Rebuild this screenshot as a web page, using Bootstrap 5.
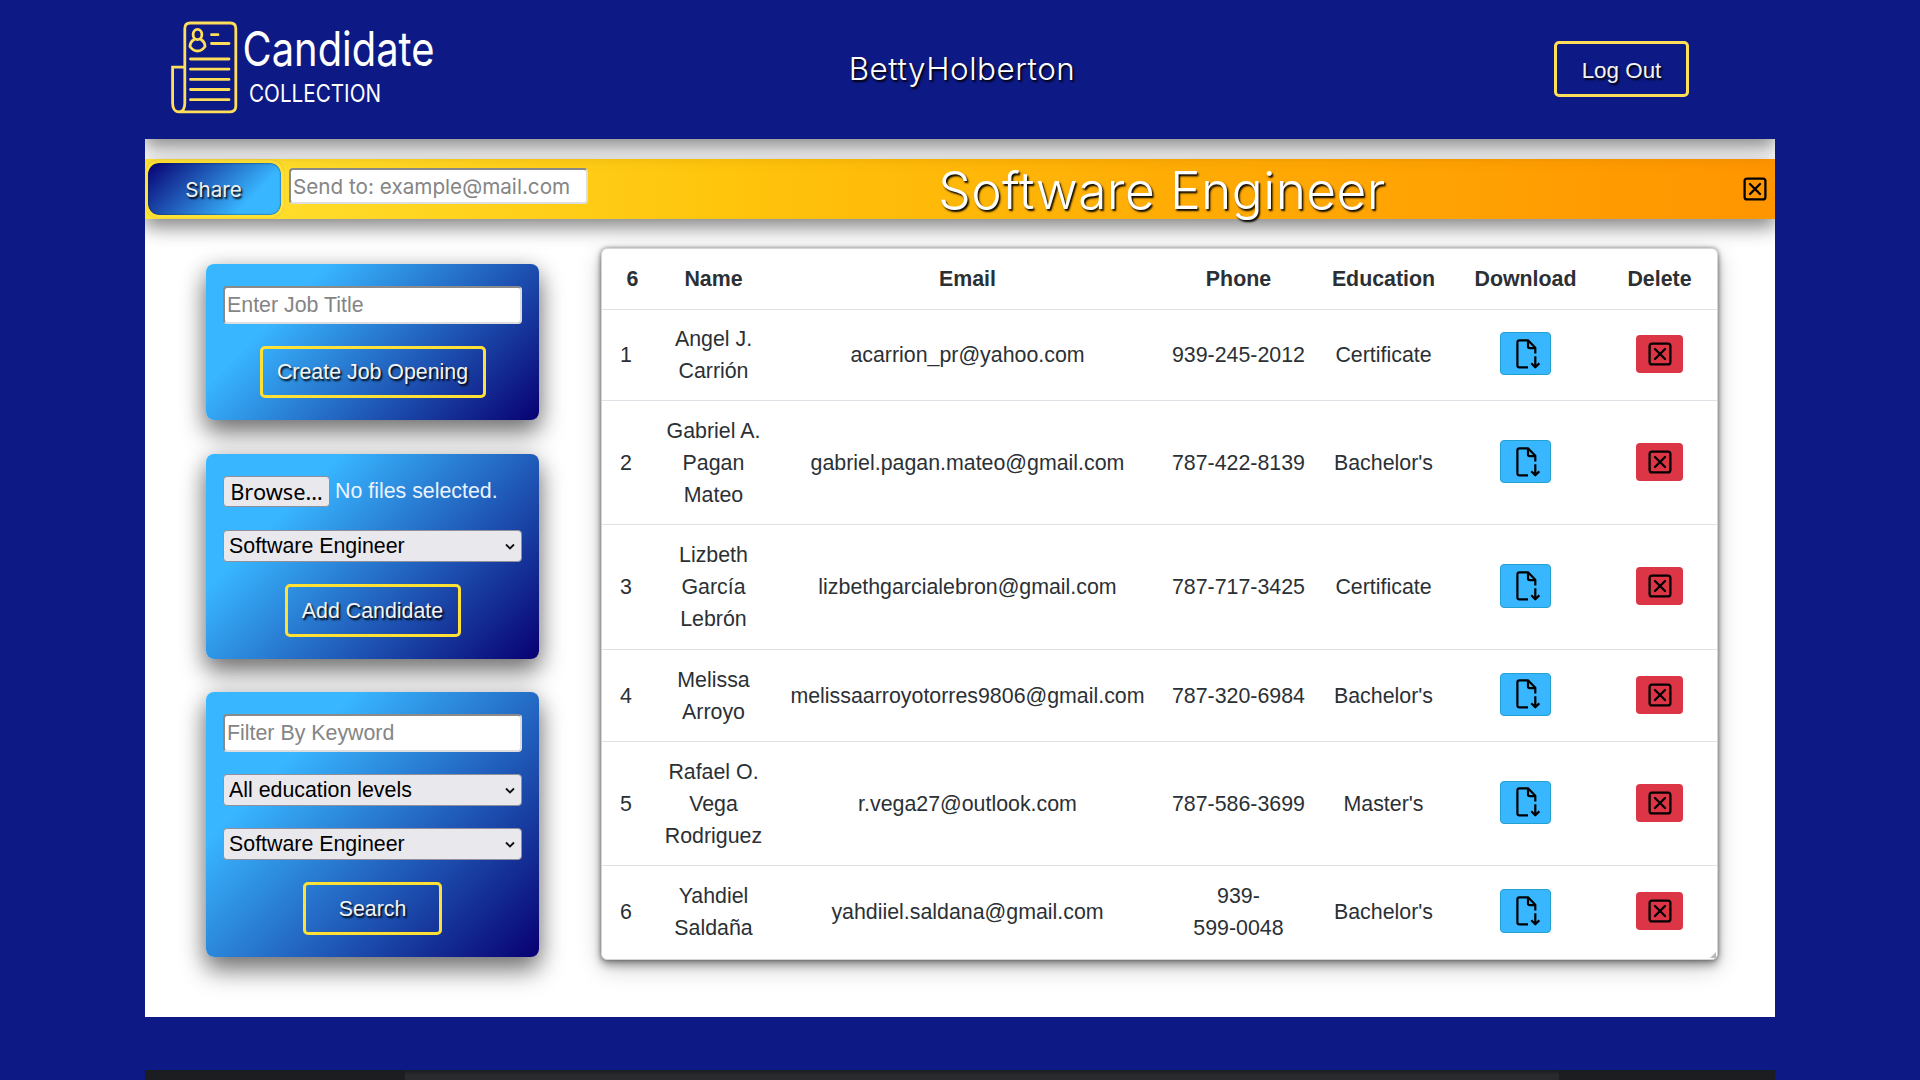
<!DOCTYPE html>
<html lang="en">
<head>
<meta charset="utf-8">
<meta name="viewport" content="width=device-width, initial-scale=1">
<title>Candidate Collection</title>
<link rel="stylesheet" href="https://cdn.jsdelivr.net/npm/bootstrap@5.3.0/dist/css/bootstrap.min.css">
<style>
body{background:#0d1985;font-family:"Liberation Sans",Arial,sans-serif;font-size:21.37px;color:#2b3035;height:1080px;overflow:hidden}
.dm{font-family:Inter,"Open Sans",sans-serif}
.page-col{width:1630px;overflow:hidden}
.site-head{height:139px;background:#0d1985;z-index:3;box-shadow:0 8px 16px rgba(0,0,0,.38),0 8px 26px rgba(0,0,0,.12)}
.head-side{width:430px}
.logo{margin-left:20px;display:block}
.user-name{font-size:31.4px;font-weight:300;color:#fff;text-shadow:1.5px 1.5px 2px #000;letter-spacing:.55px;margin-left:4px}
.line-btn{border:3.5px solid #ffe135;border-radius:5px;background:transparent;color:#f4f4f4;text-shadow:1.5px 1.5px 2px #000;height:52.5px;padding:2px 0 0;line-height:1;font-size:21.37px}
.logout{width:135px;height:56px;border-color:#ffde59;margin-right:86px;margin-top:-1px;padding-top:4px;font-size:22.4px}
.main-area{height:878px;background:#fff;overflow:hidden;padding-top:20px}
.title-bar{height:60px;background:linear-gradient(90deg,#ffe433 0%,#ffc40c 36%,#ffad05 62%,#ff9500 100%);box-shadow:0 8px 16px rgba(0,0,0,.38),0 8px 26px rgba(0,0,0,.14)}
.share-btn{width:139px;height:58px;border:3px solid #ffe135;border-radius:14px;background:linear-gradient(315deg,#38b6ff 25%,#080072 100%) padding-box;color:#eee;text-shadow:1.5px 1.5px 2px #000;font-size:20.7px;box-shadow:inset 0 0 2px #123,0 0 1px #987}
.share-btn span{position:relative;left:-1px;top:1px}
input.field{border:2px solid #8a8a8a;border-color:#8a8a8a #dedede #dedede #8a8a8a;border-radius:4px;background:#fff;color:#212529;padding:1px 2px 0;height:38px;width:100%;display:block;outline:0}
input.field::placeholder{color:#858585;opacity:1}
input.mail{width:299px;height:36px;font-size:20.7px;margin:-6px 0 0 5px}
.job-title{font-size:51.5px;font-weight:300;color:#fff;text-shadow:1.5px 2px 2px #000;letter-spacing:.4px;line-height:60px;white-space:nowrap;padding:2px 7px 0 0}
.side{width:333px;margin-left:61px;padding-top:44.5px;gap:33.5px}
.panel{border-radius:8px;background:linear-gradient(135deg,#38b6ff 25%,#080072 100%);box-shadow:0 14px 26px rgba(0,0,0,.42),0 5px 22px rgba(0,0,0,.28);padding:22px 17px;gap:22px}
.file-row{height:32.5px}
.pick{position:relative;width:100%}
.pick select{appearance:none;display:block;width:100%;height:32px;background:#e9e9ed;border:1.3px solid #8f8f9d;border-radius:4px;padding:0 5px;line-height:29px;color:#000}
.pick svg{position:absolute;right:7px;top:13px}
.browse{width:107px;height:31px;background:#e9e9ed;border:1.3px solid #8f8f9d;border-radius:4px;font-family:"Noto Sans",sans-serif;font-size:21.8px;line-height:27px;color:#000;padding:0;white-space:nowrap}
.nofile{color:#eaf3ff;margin-left:5px}
.list-card{width:1117px;height:712px;margin-left:61.5px;margin-top:28.5px;border:1.5px solid #d3d6d9;border-radius:6px;background:#fff;box-shadow:0 0 4px rgba(0,0,0,.45),0 5px 8px rgba(0,0,0,.35),0 8px 24px rgba(0,0,0,.2)}
.people{table-layout:fixed;width:1115px;margin:0;text-align:center;line-height:32px;color:inherit}
.people>:not(caption)>*>*{padding:0 10px;border-bottom:1px solid #dee2e6;background:transparent;vertical-align:middle}
.people>thead>tr>th:first-child{padding:0 0 0 13px}
.people tbody tr:last-child td{border-bottom:0}
.people td{white-space:nowrap}
.dl{width:51px;height:43.5px;background:#38b6ff;border:1.3px solid #22a0cf;border-radius:4px;padding:0}
.del{width:47px;height:38px;background:#dc3545;border:0;border-radius:4px;padding:0}
.grip{position:absolute;right:1px;bottom:1px}
.site-foot{margin-top:53px;height:10px;background:linear-gradient(#1a1c20,transparent 5px),linear-gradient(90deg,#1c1d20 260px,#292a2e 260px 1414px,#1c1d20 1414px)}
</style>
</head>
<body>
<svg class="d-none">
<symbol id="xbox" viewBox="0 0 24 24"><rect x="1.6" y="1.6" width="20.8" height="20.8" rx="2.5" fill="none" stroke="#000" stroke-width="2.3"/><path d="M7 7l10 10M17 7L7 17" fill="none" stroke="#000" stroke-width="2.3" stroke-linecap="round"/></symbol>
<symbol id="getfile" viewBox="0 0 24 30"><path d="M12 28.4H3.5Q1.4 28.4 1.4 26.5V3.3Q1.4 1.3 3.5 1.3H12L19.3 8.7V14.5M12 1.3V7.5Q12 9.2 13.8 9.2H19.3M19.3 17.3V28M15.3 24.3L19.3 28.3L23.3 24.3" fill="none" stroke="#000" stroke-width="2.2" stroke-linejoin="round"/></symbol>
<symbol id="chev" viewBox="0 0 10 8"><path d="M1 1.5l4 4 4-4" fill="none" stroke="#111" stroke-width="1.8"/></symbol>
</svg>
<div class="page-col mx-auto">
<header class="site-head d-flex justify-content-between align-items-center position-relative">
<div class="head-side">
<svg class="logo" width="280" height="139" viewBox="165 0 280 139" role="img">
<g fill="none" stroke="#ffde59" stroke-width="2.8" stroke-linecap="round">
<path d="M184.8 67.2V28.5Q184.8 23 190.3 23H230.3Q235.8 23 235.8 28.5V106Q235.8 111.8 230.3 111.8H178.8C174 111.8 172.6 107 172.6 103V67.2H184.8V103C184.8 107 183.7 111.8 178.8 111.8"/>
<path d="M211.5 34.7H218M211.5 43.5H229M190.5 59H229M190.5 69.2H229M190.5 79.4H229M190.5 89.5H229M190.5 99.7H229"/>
<ellipse cx="197.5" cy="34.5" rx="4.4" ry="5.2"/><path d="M194 39.5Q190 42 190 46.5Q193 51 197.5 51Q202 51 205 46.5Q205 42 201 39.5"/>
</g>
<g class="dm" fill="#fff"><text x="242.5" y="66" font-size="48" font-weight="400" textLength="192" lengthAdjust="spacingAndGlyphs">Candidate</text>
<text x="249" y="101.5" font-size="24" font-weight="400" textLength="132" lengthAdjust="spacingAndGlyphs">COLLECTION</text></g>
</svg>
</div>
<div class="user-name dm">BettyHolberton</div>
<div class="head-side d-flex justify-content-end"><button class="line-btn logout">Log Out</button></div>
</header>
<main class="main-area">
<div class="title-bar d-flex align-items-center position-relative">
<button class="share-btn dm p-0"><span>Share</span></button>
<input class="field mail dm" placeholder="Send to: example@mail.com">
<div class="job-title dm flex-grow-1 text-center">Software Engineer</div>
<svg width="24" height="24" class="me-2"><use href="#xbox"/></svg>
</div>
<div class="d-flex align-items-start">
<aside class="side d-flex flex-column">
<form class="panel d-flex flex-column align-items-center"><input class="field" placeholder="Enter Job Title"><button type="button" class="line-btn" style="width:226px">Create Job Opening</button></form>
<form class="panel d-flex flex-column align-items-center"><div class="file-row d-flex align-items-center w-100"><button type="button" class="browse">Browse…</button><span class="nofile lh-1">No files selected.</span></div>
<div class="pick"><select><option>Software Engineer</option></select><svg width="10" height="8"><use href="#chev"/></svg></div>
<button type="button" class="line-btn" style="width:176px">Add Candidate</button></form>
<form class="panel d-flex flex-column align-items-center"><input class="field" placeholder="Filter By Keyword">
<div class="pick"><select><option>All education levels</option></select><svg width="10" height="8"><use href="#chev"/></svg></div>
<div class="pick"><select><option>Software Engineer</option></select><svg width="10" height="8"><use href="#chev"/></svg></div>
<button type="button" class="line-btn" style="width:139px">Search</button></form>
</aside>
<section class="list-card position-relative">
<table class="table people">
<colgroup><col style="width:49px"><col style="width:126px"><col style="width:382px"><col style="width:160px"><col style="width:130px"><col style="width:154px"><col style="width:114px"></colgroup>
<thead><tr style="height:60.5px"><th>6</th><th>Name</th><th>Email</th><th>Phone</th><th>Education</th><th>Download</th><th>Delete</th></tr></thead>
<tbody id="rows"></tbody>
</table>
<svg class="grip" width="6" height="6"><path d="M0 6L6 0V6Z" fill="#bbb"/></svg>
</section>
</div>
</main>
<footer class="site-foot"></footer>
</div>
<script>
const people=[
["Angel J.<br>Carrión","acarrion_pr@yahoo.com","939-245-2012","Certificate",91.7],
["Gabriel A.<br>Pagan<br>Mateo","gabriel.pagan.mateo@gmail.com","787-422-8139","Bachelor's",124.3],
["Lizbeth<br>García<br>Lebrón","lizbethgarcialebron@gmail.com","787-717-3425","Certificate",124.7],
["Melissa<br>Arroyo","melissaarroyotorres9806@gmail.com","787-320-6984","Bachelor's",91.7],
["Rafael O.<br>Vega<br>Rodriguez","r.vega27@outlook.com","787-586-3699","Master's",124.3],
["Yahdiel<br>Saldaña","yahdiiel.saldana@gmail.com","939-<br>599-0048","Bachelor's",92.3]];
document.getElementById("rows").innerHTML=people.map((p,i)=>`<tr style="height:${p[4]}px"><td>${i+1}</td><td>${p[0]}</td><td>${p[1]}</td><td>${p[2]}</td><td>${p[3]}</td><td><button class="dl d-inline-flex align-items-center justify-content-center"><svg width="24" height="30" class="ms-1"><use href="#getfile"/></svg></button></td><td><button class="del d-inline-flex align-items-center justify-content-center"><svg width="24" height="24"><use href="#xbox"/></svg></button></td></tr>`).join("");
</script>
<script src="https://cdn.jsdelivr.net/npm/bootstrap@5.3.0/dist/js/bootstrap.bundle.min.js"></script>
</body>
</html>
